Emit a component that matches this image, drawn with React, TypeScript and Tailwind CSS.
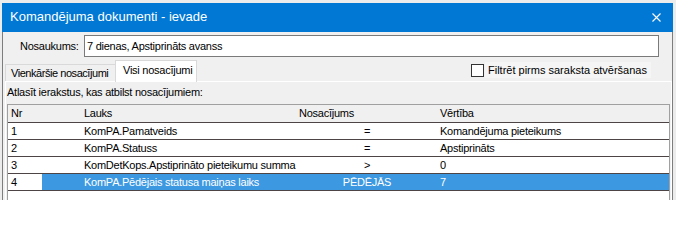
import * as React from 'react';

type Rule = { nr: number; field: string; op: string; value: string };

const rules: Rule[] = [
    { nr: 1, field: 'KomPA.Pamatveids', op: '=', value: 'Komandējuma pieteikums' },
    { nr: 2, field: 'KomPA.Statuss', op: '=', value: 'Apstiprināts' },
    { nr: 3, field: 'KomDetKops.Apstiprināto pieteikumu summa', op: '>', value: '0' },
    { nr: 4, field: 'KomPA.Pēdējais statusa maiņas laiks', op: 'PĒDĒJĀS', value: '7' },
];

const selectedNr = 4;

function App() {
    return (
        <div className="w-[676px] h-[200px] overflow-hidden bg-[#ececec] pt-[3px] pl-[2px] font-['Liberation_Sans',Arial,sans-serif] text-[11px] tracking-[-0.25px] text-black">
            <div className="w-[671px] h-[240px] flex flex-col">
                {/* Title bar */}
                <div className="h-[29px] bg-[#0078d4] flex items-center pl-[8px] pr-[12px] shrink-0">
                    <span className="text-[13px] tracking-normal text-white pb-[1px]">Komandējuma dokumenti - ievade</span>
                    <svg className="ml-auto mb-[1px]" width="9" height="9" viewBox="0 0 9 9">
                        <path d="M0.5 0.5 L8.5 8.5 M8.5 0.5 L0.5 8.5" stroke="#ffffff" strokeWidth="1.1" />
                    </svg>
                </div>

                <div className="flex-1 bg-[#f0f0f0] border-l border-r border-[#7d7d7d] flex flex-col">
                    {/* Nosaukums */}
                    <div className="flex items-center pt-[3px] h-[25px] shrink-0">
                        <span className="pl-[17px] w-[81px]">Nosaukums:</span>
                        <div className="w-[575px] h-[22px] bg-white border border-[#7a7a7a] flex items-center pl-[2px]">
                            7 dienas, Apstiprināts avanss
                        </div>
                    </div>

                    {/* Tabs */}
                    <div className="flex items-end h-[21px] mt-[3px] pl-[2px] shrink-0">
                        <div className="w-[110px] h-[17px] pl-[5px] flex items-center whitespace-nowrap tracking-[-0.45px] border-t border-l border-[#d9d9d9] bg-[#f0f0f0]">
                            Vienkāršie nosacījumi
                        </div>
                        <div className="relative z-10 w-[82px] h-[22px] -mb-[1px] pl-[7px] pb-[3px] flex items-center whitespace-nowrap border-t border-l border-r border-[#d9d9d9] bg-white">
                            Visi nosacījumi
                        </div>
                        <div className="ml-[274px] w-[180px] mb-[3px] flex items-center h-[16px]">
                            <div className="w-[13px] h-[13px] border border-[#333333] bg-white shrink-0" />
                            <span className="ml-[1px] pl-[3px] flex-1 h-[16px] leading-[16px] bg-[#f5f5f5] tracking-[0px] whitespace-nowrap">Filtrēt pirms saraksta atvēršanas</span>
                        </div>
                    </div>

                    {/* Tab page */}
                    <div className="ml-[2px] w-[667px] flex-1 border-t border-l border-r border-white bg-[#f0f0f0] flex flex-col">
                        <div className="h-[20px] leading-[20px] pl-[1px]">Atlasīt ierakstus, kas atbilst nosacījumiem:</div>
                        <div className="mt-[2px] ml-[1px] w-[663px] flex-1 border border-[#a0a0a0] bg-white">
                            <div className="h-[18px] flex items-center bg-[#f0f0f0] border-b border-[#4d4545]">
                                <div className="w-[34px] pl-[3px]">Nr</div>
                                <div className="w-[255px] pl-[42px]">Lauks</div>
                                <div className="w-[140px] pl-[2px]">Nosacījums</div>
                                <div className="flex-1 pl-[3px]">Vērtība</div>
                            </div>
                            {rules.map((r) => {
                                const sel = r.nr === selectedNr;
                                return (
                                    <div key={r.nr} className="h-[17px] flex items-stretch border-b border-[#4d4545]">
                                        <div className="w-[34px] pl-[3px] flex items-center bg-white">{r.nr}</div>
                                        <div className={`flex-1 flex items-center ${sel ? 'bg-[#3c98e0] text-white' : 'bg-white'}`}>
                                            <div className="w-[255px] pl-[42px] whitespace-nowrap">{r.field}</div>
                                            <div className="w-[140px] text-center">{r.op}</div>
                                            <div className="flex-1 pl-[3px] whitespace-nowrap">{r.value}</div>
                                        </div>
                                    </div>
                                );
                            })}
                        </div>
                    </div>
                </div>
            </div>
        </div>
    );
}

export default App;
